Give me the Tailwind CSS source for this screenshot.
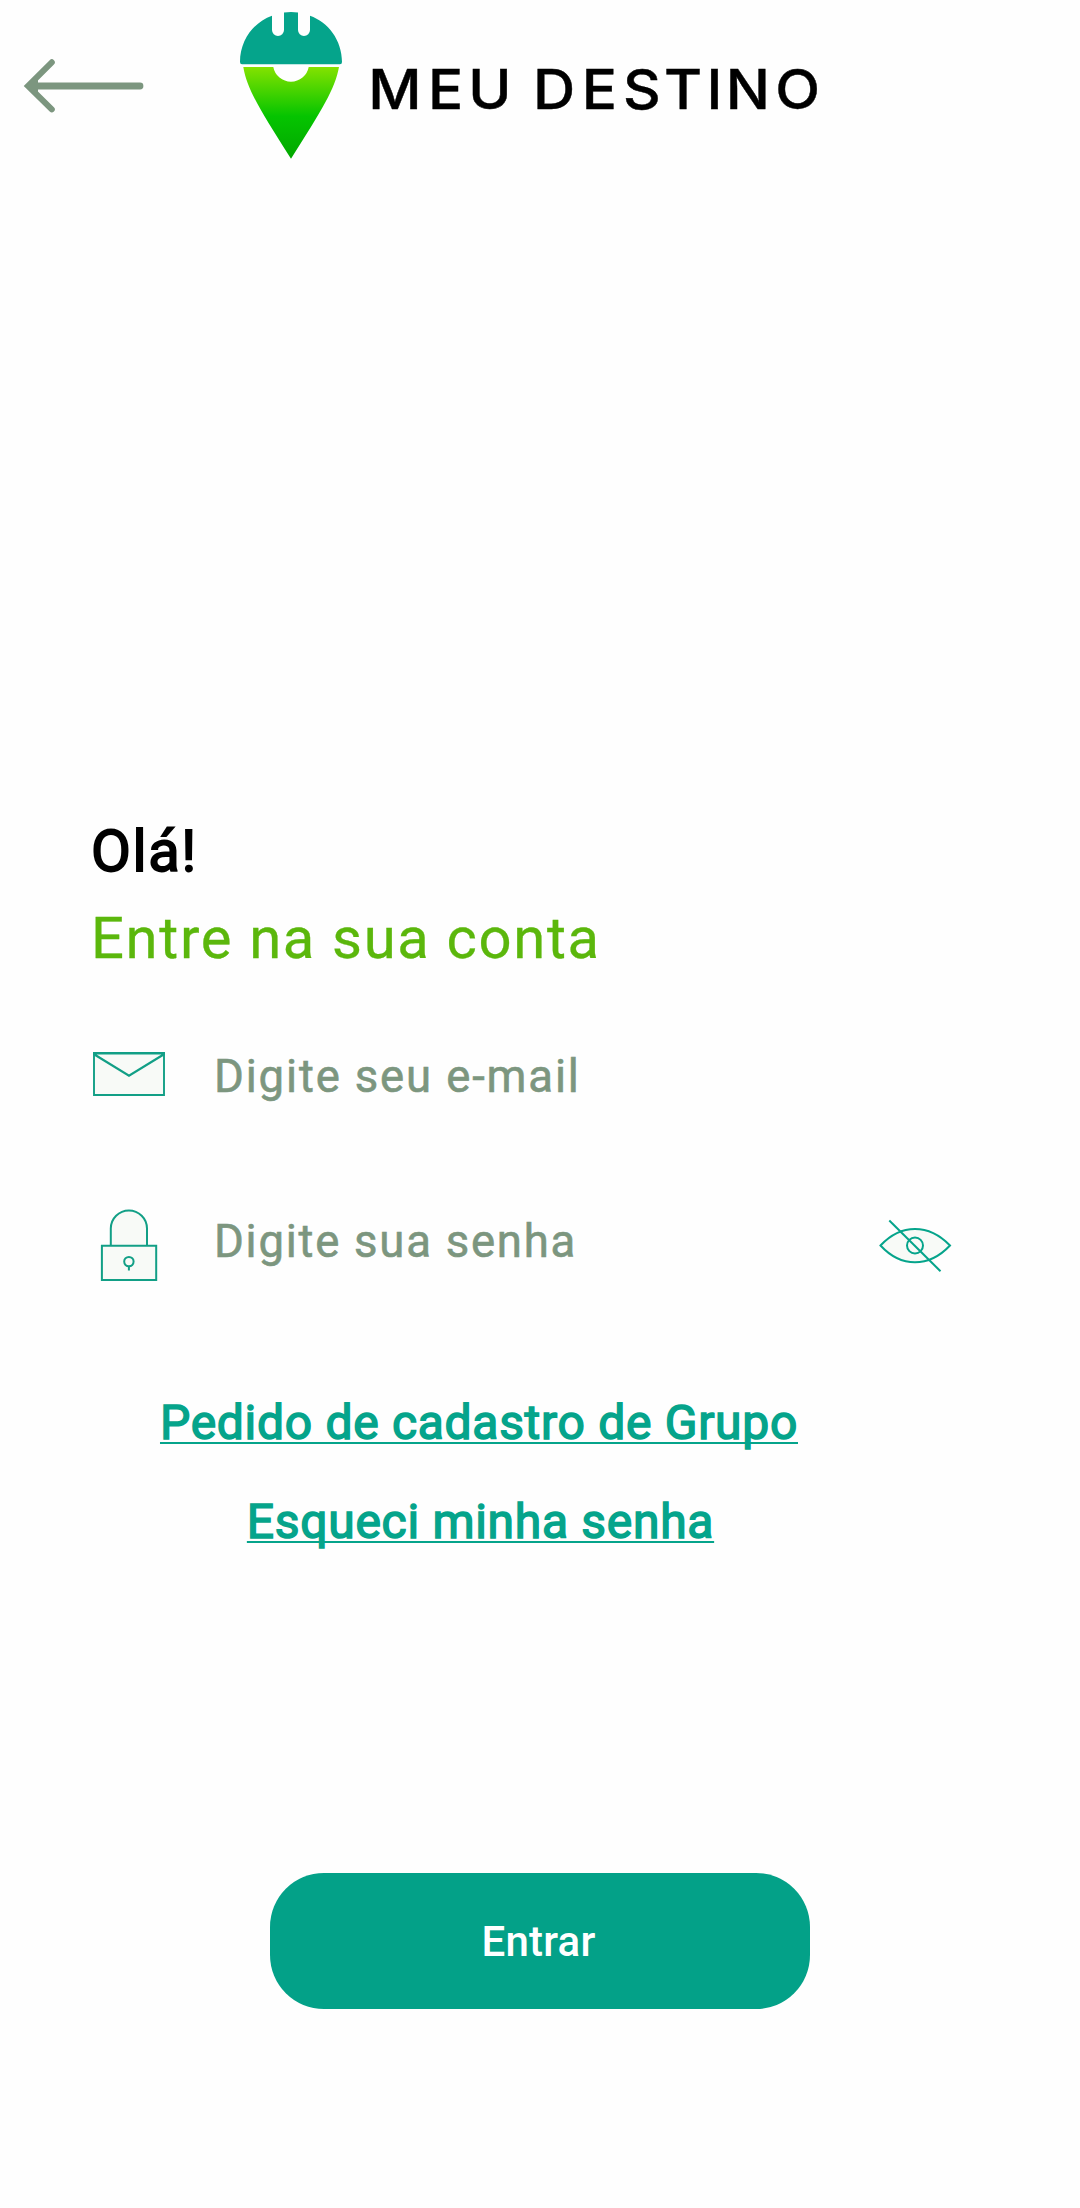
<!DOCTYPE html>
<html lang="pt-BR">
<head>
<meta charset="utf-8">
<title>Meu Destino</title>
<script src="https://cdn.jsdelivr.net/npm/@tailwindcss/browser@4"></script>
</head>
<body class="bg-[#fefefe] font-[Roboto,sans-serif]">
<div class="flex h-[2208px] w-[1080px] flex-col overflow-hidden">
  <header class="flex h-[180px] shrink-0 items-start">
    <a href="#" aria-label="Voltar" class="block">
      <svg class="block" width="225" height="180" viewBox="0 0 225 180" fill="none" stroke="#7c967f" stroke-linecap="round">
        <path d="M36 86H140" stroke-width="6.8"/>
        <path d="M51.8 62.3 28 86 51.8 109.3" stroke-width="6"/>
        <path d="M25 86 38 75V97Z" fill="#7c967f" stroke="none"/>
      </svg>
    </a>
    <svg class="block" width="140" height="180" viewBox="225 0 140 180">
      <defs>
        <linearGradient id="pin" x1="0" y1="67" x2="0" y2="158" gradientUnits="userSpaceOnUse">
          <stop offset="0" stop-color="#84e200"/><stop offset=".54" stop-color="#05c400"/><stop offset="1" stop-color="#02a800"/>
        </linearGradient>
      </defs>
      <path fill="#05a48b" d="M272 15.7V30A6 6 0 0 0 284 30V12.6Q291 11.6 298 12.6V30A6 6 0 0 0 310 30V15.7C328 22 342 40 342 62Q342 64.2 340 64.2H242Q240 64.2 240 62C240 40 254 22 272 15.7Z"/>
      <path fill="url(#pin)" d="M243.3 67H273.3A18 18 0 0 0 308.7 67H339C335 89 322 110 291 158.7C260 110 247 89 243.3 67Z"/>
    </svg>
    <svg class="block font-[Inter,sans-serif] font-medium" width="470" height="180" viewBox="0 0 470 180">
      <text transform="scale(1.07 1)" x="3 58.8 96.6 135 157 202.6 241.2 279.5 319.1 337.2 383.4" y="108.8" font-size="54.6" fill="#000" stroke="#000" stroke-width=".4">MEU DESTINO</text>
    </svg>
  </header>

  <main class="flex flex-col pt-[635px]">
    <h1 class="pl-[91px] text-[58px] leading-[72px] tracking-[1.6px] text-black [-webkit-text-stroke:1.8px]">Olá!</h1>
    <p class="mt-[15px] pl-[91px] text-[58px] leading-[72px] tracking-[1.65px] text-[#5bb70c] [-webkit-text-stroke:0.3px]">Entre na sua conta</p>

    <label class="mt-[73px] flex h-[60px] items-center pl-[91px]">
      <svg class="mb-[7px] block shrink-0" width="76" height="48" viewBox="91 1049 76 48" stroke="#129f86" stroke-width="1.9">
        <path fill="#f8faf7" d="M94 1052H164V1094H94Z"/>
        <path fill="none" d="M94 1053.2 129 1074.6 164 1053.2M93 1052.3H165" stroke-width="2.2"/>
      </svg>
      <span class="pl-[47px] text-[45.5px] leading-[60px] tracking-[1.85px] text-[#7c967f] [-webkit-text-stroke:0.6px]">Digite seu e-mail</span>
    </label>

    <label class="mt-[105px] flex h-[60px] items-center pl-[91px]">
      <svg class="mt-[4px] block shrink-0" width="76" height="76" viewBox="91 1206 76 76" fill="#f8faf7" stroke="#129f86" stroke-width="2">
        <path d="M110.8 1245V1228.5A18.1 18.1 0 0 1 147 1228.5V1245"/>
        <path d="M101.9 1245.7H156.2V1280H101.9Z"/>
        <circle cx="128.9" cy="1261.6" r="4.7" stroke-width="2"/>
        <path d="M128.9 1266V1270.5"/>
      </svg>
      <span class="pl-[47px] text-[45.5px] leading-[60px] tracking-[1.75px] text-[#7c967f] [-webkit-text-stroke:0.6px]">Digite sua senha</span>
      <svg class="mt-2 mr-[128px] ml-auto block shrink-0" width="74" height="60" viewBox="878 1216 74 60" fill="#f8faf7" stroke="#05a48b" stroke-width="2">
        <path d="M880.5 1245.5Q896 1229 915 1229T950 1245.5Q934 1262.3 915 1262.3T880.5 1245.5Z"/>
        <circle cx="915" cy="1245.5" r="8"/>
        <path d="M889.3 1220.5 940.5 1271.3"/>
      </svg>
    </label>

    <nav class="mt-[119px] flex w-[958px] flex-col items-center gap-[35px] text-[48px] leading-[64px] tracking-[0.7px] text-[#05a48b] [-webkit-text-stroke:1.5px]">
      <a href="#" class="underline decoration-2 underline-offset-[3px] [text-decoration-skip-ink:none]">Pedido de cadastro de Grupo</a>
      <a href="#" class="mr-[-3px] underline decoration-2 underline-offset-[3px] [text-decoration-skip-ink:none]">Esqueci minha senha</a>
    </nav>

    <button class="mt-[319px] ml-[270px] flex h-[136px] w-[540px] items-center justify-center rounded-[54px] bg-[#03a188] pr-[3px] text-[42px] font-medium tracking-[0.2px] text-white">Entrar</button>
  </main>
</div>
</body>
</html>
